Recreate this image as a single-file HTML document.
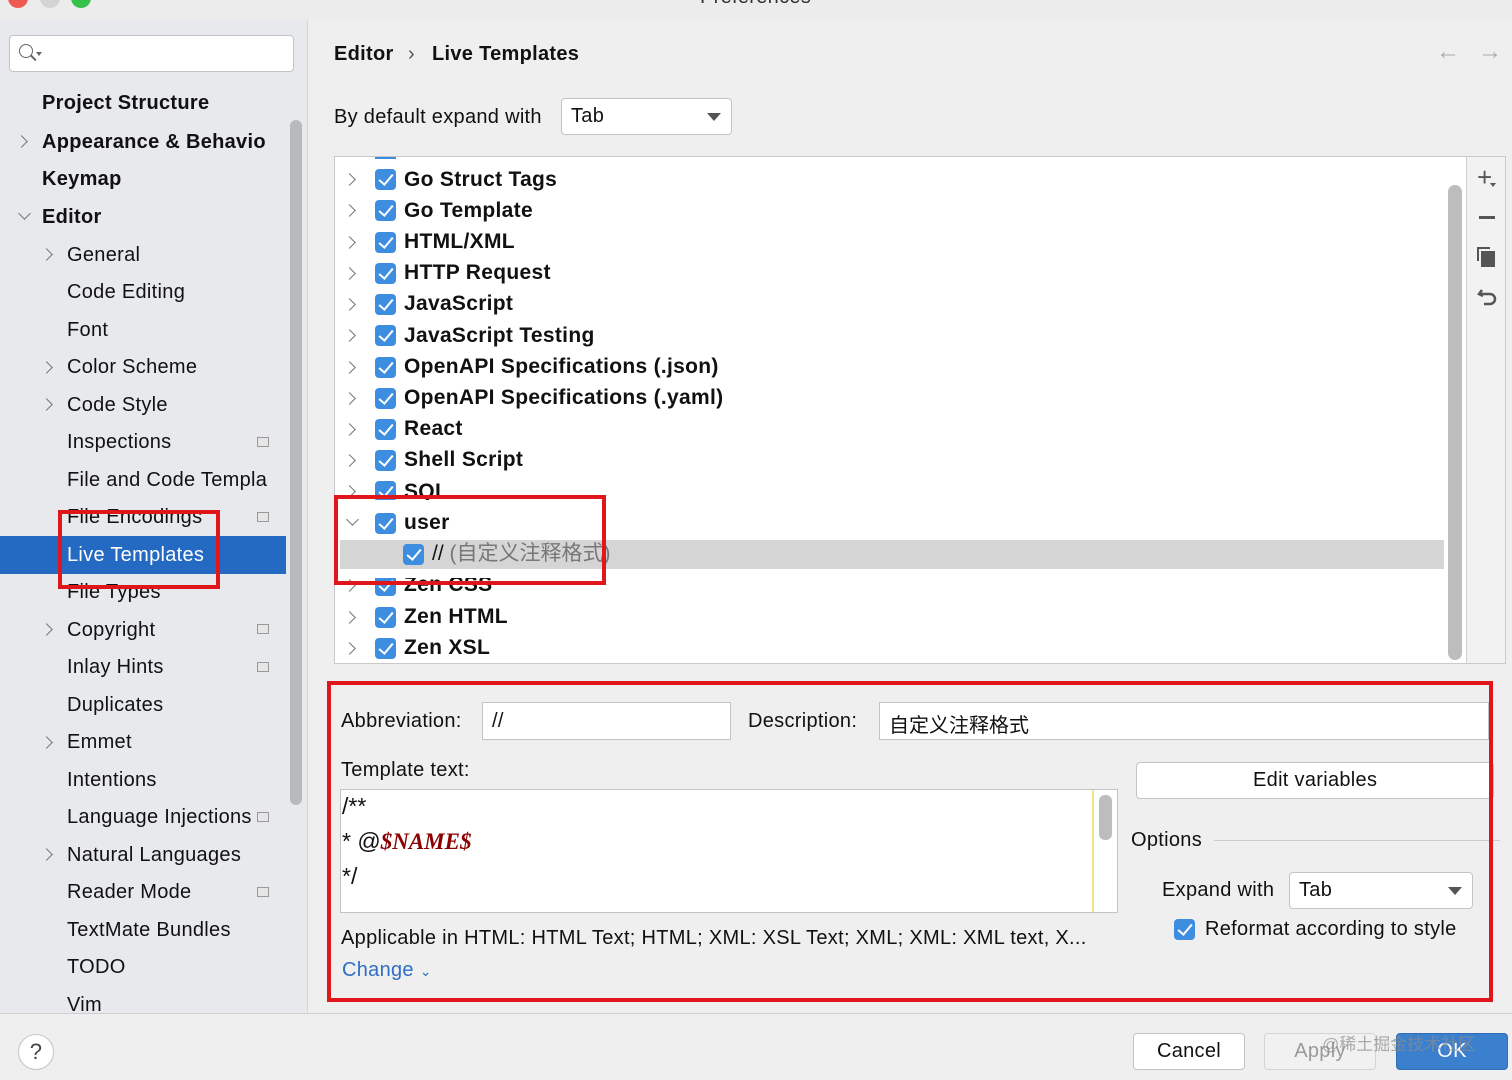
<!DOCTYPE html>
<html><head><meta charset="utf-8"><style>
*{box-sizing:border-box;margin:0;padding:0}
body{width:1512px;height:1080px;overflow:hidden;background:#efefef;font-family:"Liberation Sans","Noto Sans CJK SC",sans-serif;color:#111;position:relative;letter-spacing:0.3px}
.a{position:absolute;white-space:nowrap}
.sb{font-size:20px;line-height:24px}
.b{font-weight:bold}
.chev{position:absolute;width:9px;height:9px;border-right:1.6px solid #777;border-bottom:1.6px solid #777;transform:rotate(-45deg)}
.chevd{position:absolute;width:9px;height:9px;border-right:1.6px solid #777;border-bottom:1.6px solid #777;transform:rotate(45deg)}
.cb{position:absolute;width:21px;height:21px;background:#3d8ee0;border-radius:4px}
.cb:after{content:"";position:absolute;left:7px;top:2px;width:6px;height:12px;border-right:2.5px solid #fff;border-bottom:2.5px solid #fff;transform:rotate(40deg)}
.tr{font-size:21px;font-weight:bold;line-height:26px}
.mi{position:absolute;width:12px;height:10px;border:1.3px solid #999;background:#e6e6e6}
</style></head><body>
<div class="a" style="left:0;top:0;width:1512px;height:20px;background:#ececec"></div>
<div class="a" style="left:8px;top:-12px;width:20px;height:20px;border-radius:50%;background:#ee5a52"></div>
<div class="a" style="left:40px;top:-12px;width:20px;height:20px;border-radius:50%;background:#d4d4d4"></div>
<div class="a" style="left:71px;top:-12px;width:20px;height:20px;border-radius:50%;background:#36c24a"></div>
<div class="a" style="left:700px;top:-14px;font-size:20px;color:#333">Preferences</div>
<div class="a" style="left:0;top:20px;width:308px;height:994px;background:#e7e9ed;border-right:1px solid #d6d6d6"></div>
<div class="a" style="left:9px;top:35px;width:285px;height:37px;background:#fff;border:1.5px solid #c4c4c4;border-radius:4px"></div>
<div class="a" style="left:19px;top:44px;width:14px;height:14px;border:1.5px solid #666;border-radius:50%"></div>
<div class="a" style="left:30px;top:57px;width:7px;height:1.6px;background:#666;transform:rotate(45deg)"></div>
<div class="a" style="left:36px;top:52px;border-left:3px solid transparent;border-right:3px solid transparent;border-top:4px solid #666"></div>
<div class="a" style="left:290px;top:120px;width:12px;height:685px;background:#b8b9bb;border-radius:6px"></div>
<div class="a" style="left:0;top:536px;width:286px;height:38px;background:#2469c2"></div>

<div class="a sb b" style="left:42px;top:91px">Project Structure</div>
<div class="chev" style="left:17px;top:137px"></div>
<div class="a sb b" style="left:42px;top:130px">Appearance &amp; Behavio</div>
<div class="a sb b" style="left:42px;top:167px">Keymap</div>
<div class="chevd" style="left:20px;top:209px"></div>
<div class="a sb b" style="left:42px;top:205px">Editor</div>
<div class="chev" style="left:42px;top:250px"></div>
<div class="a sb" style="left:67px;top:243px">General</div>
<div class="a sb" style="left:67px;top:280px">Code Editing</div>
<div class="a sb" style="left:67px;top:318px">Font</div>
<div class="chev" style="left:42px;top:363px"></div>
<div class="a sb" style="left:67px;top:355px">Color Scheme</div>
<div class="chev" style="left:42px;top:400px"></div>
<div class="a sb" style="left:67px;top:393px">Code Style</div>
<div class="a sb" style="left:67px;top:430px">Inspections</div><div class="mi" style="left:257px;top:437px"></div>
<div class="a sb" style="left:67px;top:468px">File and Code Templa</div>
<div class="a sb" style="left:67px;top:505px">File Encodings</div><div class="mi" style="left:257px;top:512px"></div>
<div class="a sb" style="left:67px;top:543px;color:#fff">Live Templates</div>
<div class="a sb" style="left:67px;top:580px">File Types</div>
<div class="chev" style="left:42px;top:625px"></div>
<div class="a sb" style="left:67px;top:618px">Copyright</div><div class="mi" style="left:257px;top:624px"></div>
<div class="a sb" style="left:67px;top:655px">Inlay Hints</div><div class="mi" style="left:257px;top:662px"></div>
<div class="a sb" style="left:67px;top:693px">Duplicates</div>
<div class="chev" style="left:42px;top:738px"></div>
<div class="a sb" style="left:67px;top:730px">Emmet</div>
<div class="a sb" style="left:67px;top:768px">Intentions</div>
<div class="a sb" style="left:67px;top:805px;width:184px;overflow:hidden">Language Injections</div><div class="mi" style="left:257px;top:812px"></div>
<div class="chev" style="left:42px;top:850px"></div>
<div class="a sb" style="left:67px;top:843px">Natural Languages</div>
<div class="a sb" style="left:67px;top:880px">Reader Mode</div><div class="mi" style="left:257px;top:887px"></div>
<div class="a sb" style="left:67px;top:918px">TextMate Bundles</div>
<div class="a sb" style="left:67px;top:955px">TODO</div>
<div class="a sb" style="left:67px;top:993px">Vim</div>
<div class="a" style="left:58px;top:510px;width:162px;height:79px;border:4px solid #e0161b"></div>

<div class="a b" style="left:334px;top:43px;font-size:20px">Editor</div>
<div class="a" style="left:408px;top:43px;font-size:20px;color:#555">›</div>
<div class="a b" style="left:432px;top:43px;font-size:20px">Live Templates</div>
<div class="a" style="left:1436px;top:38px;font-size:24px;color:#aaa">←</div>
<div class="a" style="left:1478px;top:38px;font-size:24px;color:#aaa">→</div>
<div class="a" style="left:334px;top:106px;font-size:20px">By default expand with</div>
<div class="a" style="left:561px;top:98px;width:171px;height:37px;background:#fff;border:1.5px solid #c4c4c4;border-radius:4px"></div>
<div class="a" style="left:571px;top:105px;font-size:20px">Tab</div>
<div class="a" style="left:707px;top:113px;border-left:7px solid transparent;border-right:7px solid transparent;border-top:8px solid #555"></div>

<div class="a" style="left:334px;top:156px;width:1172px;height:508px;background:#fff;border:1px solid #c9c9c9"></div>
<div class="a" style="left:1466px;top:157px;width:39px;height:506px;background:#f2f2f2;border-left:1px solid #d0d0d0"></div>
<div class="a" style="left:1448px;top:185px;width:14px;height:475px;background:#bdbdbd;border-radius:7px"></div>
<div class="a" style="left:1477px;top:164px;font-size:26px;color:#555;line-height:26px">+</div>
<div class="a" style="left:1490px;top:183px;border-left:3px solid transparent;border-right:3px solid transparent;border-top:4px solid #555"></div>
<div class="a" style="left:1479px;top:216px;width:16px;height:2.5px;background:#555"></div>
<div class="a" style="left:1477px;top:247px;width:13px;height:14px;border-left:2.5px solid #555;border-top:2.5px solid #555"></div>
<div class="a" style="left:1481px;top:251px;width:14px;height:16px;background:#555"></div>
<svg class="a" style="left:1476px;top:287px" width="24" height="24" viewBox="0 0 24 24"><path d="M6 3 L3 7 L7 9 M3 7 H14 a5 5 0 0 1 0 10 H8" fill="none" stroke="#555" stroke-width="2.5"/></svg>

<div class="a" style="left:340px;top:540px;width:1104px;height:29px;background:#d5d5d5"></div>
<div class="a" style="left:375px;top:157px;width:21px;height:2px;background:#3d8ee0"></div>

<div class="chev" style="left:345px;top:175px"></div><div class="cb" style="left:375px;top:169px"></div><div class="a tr" style="left:404px;top:167px">Go Struct Tags</div>
<div class="chev" style="left:345px;top:206px"></div><div class="cb" style="left:375px;top:200px"></div><div class="a tr" style="left:404px;top:198px">Go Template</div>
<div class="chev" style="left:345px;top:238px"></div><div class="cb" style="left:375px;top:232px"></div><div class="a tr" style="left:404px;top:229px">HTML/XML</div>
<div class="chev" style="left:345px;top:269px"></div><div class="cb" style="left:375px;top:263px"></div><div class="a tr" style="left:404px;top:260px">HTTP Request</div>
<div class="chev" style="left:345px;top:300px"></div><div class="cb" style="left:375px;top:294px"></div><div class="a tr" style="left:404px;top:291px">JavaScript</div>
<div class="chev" style="left:345px;top:331px"></div><div class="cb" style="left:375px;top:325px"></div><div class="a tr" style="left:404px;top:323px">JavaScript Testing</div>
<div class="chev" style="left:345px;top:363px"></div><div class="cb" style="left:375px;top:357px"></div><div class="a tr" style="left:404px;top:354px">OpenAPI Specifications (.json)</div>
<div class="chev" style="left:345px;top:394px"></div><div class="cb" style="left:375px;top:388px"></div><div class="a tr" style="left:404px;top:385px">OpenAPI Specifications (.yaml)</div>
<div class="chev" style="left:345px;top:425px"></div><div class="cb" style="left:375px;top:419px"></div><div class="a tr" style="left:404px;top:416px">React</div>
<div class="chev" style="left:345px;top:456px"></div><div class="cb" style="left:375px;top:450px"></div><div class="a tr" style="left:404px;top:447px">Shell Script</div>
<div style="position:absolute;left:340px;top:476px;width:200px;height:24px;overflow:hidden">
<div class="chev" style="left:5px;top:11px"></div><div class="cb" style="left:35px;top:5px"></div><div class="a tr" style="left:64px;top:3px">SQL</div></div>
<div class="chevd" style="left:348px;top:515px"></div><div class="cb" style="left:375px;top:513px"></div><div class="a tr" style="left:404px;top:510px">user</div>
<div class="cb" style="left:403px;top:544px"></div><div class="a" style="left:432px;top:541px;font-size:21px;line-height:26px;color:#777;letter-spacing:0"><span style="color:#111">//</span> (自定义注释格式)</div>
<div style="position:absolute;left:340px;top:578px;width:200px;height:22px;overflow:hidden">
<div class="chev" style="left:5px;top:3px"></div><div class="cb" style="left:35px;top:-3px"></div><div class="a tr" style="left:64px;top:-6px">Zen CSS</div></div>
<div class="chev" style="left:345px;top:613px"></div><div class="cb" style="left:375px;top:607px"></div><div class="a tr" style="left:404px;top:604px">Zen HTML</div>
<div class="chev" style="left:345px;top:644px"></div><div class="cb" style="left:375px;top:638px"></div><div class="a tr" style="left:404px;top:635px">Zen XSL</div>
<div class="a" style="left:334px;top:495px;width:272px;height:90px;border:4px solid #e0161b"></div>

<div class="a" style="left:341px;top:710px;font-size:20px">Abbreviation:</div>
<div class="a" style="left:482px;top:702px;width:249px;height:38px;background:#fff;border:1.5px solid #c4c4c4"></div>
<div class="a" style="left:492px;top:710px;font-size:20px">//</div>
<div class="a" style="left:748px;top:710px;font-size:20px">Description:</div>
<div class="a" style="left:879px;top:702px;width:610px;height:38px;background:#fff;border:1.5px solid #c4c4c4"></div>
<div class="a" style="left:889px;top:709px;font-size:20px;letter-spacing:0">自定义注释格式</div>
<div class="a" style="left:341px;top:759px;font-size:20px">Template text:</div>
<div class="a" style="left:340px;top:789px;width:778px;height:124px;background:#fff;border:1.5px solid #c4c4c4"></div>
<div class="a" style="left:1092px;top:790px;width:1.5px;height:122px;background:#f0e58a"></div>
<div class="a" style="left:1099px;top:795px;width:13px;height:45px;background:#bdbdbd;border-radius:6px"></div>
<div class="a" style="left:342px;top:789px;font-size:23px;line-height:35px;letter-spacing:0">/**<br>* @<span style="color:#8b0000;font-style:italic;font-weight:bold;font-family:'Liberation Serif',serif">$NAME$</span><br>*/</div>
<div class="a" style="left:341px;top:927px;font-size:20px">Applicable in HTML: HTML Text; HTML; XML: XSL Text; XML; XML: XML text, X...</div>
<div class="a" style="left:342px;top:959px;font-size:20px;color:#2f6ec4">Change <span style="font-size:14px">⌄</span></div>
<div class="a" style="left:1136px;top:762px;width:358px;height:37px;background:#fff;border:1.5px solid #c4c4c4;border-radius:4px"></div>
<div class="a" style="left:1253px;top:769px;font-size:20px">Edit variables</div>
<div class="a" style="left:1131px;top:829px;font-size:20px">Options</div>
<div class="a" style="left:1214px;top:840px;width:286px;height:1px;background:#ccc"></div>
<div class="a" style="left:1162px;top:879px;font-size:20px">Expand with</div>
<div class="a" style="left:1289px;top:872px;width:184px;height:37px;background:#fff;border:1.5px solid #c4c4c4;border-radius:4px"></div>
<div class="a" style="left:1299px;top:879px;font-size:20px">Tab</div>
<div class="a" style="left:1448px;top:887px;border-left:7px solid transparent;border-right:7px solid transparent;border-top:8px solid #555"></div>
<div class="cb" style="left:1174px;top:919px"></div>
<div class="a" style="left:1205px;top:918px;font-size:20px">Reformat according to style</div>
<div class="a" style="left:327px;top:681px;width:1166px;height:321px;border:4px solid #e0161b"></div>

<div class="a" style="left:0;top:1013px;width:1512px;height:1px;background:#d0d0d0"></div>
<div class="a" style="left:18px;top:1034px;width:36px;height:36px;border-radius:50%;background:#fff;border:1.5px solid #c4c4c4;font-size:22px;text-align:center;line-height:33px;color:#444">?</div>
<div class="a" style="left:1133px;top:1033px;width:112px;height:37px;background:#fff;border:1.5px solid #c4c4c4;border-radius:4px;font-size:20px;text-align:center;line-height:34px">Cancel</div>
<div class="a" style="left:1264px;top:1033px;width:112px;height:37px;background:#f1f1f1;border:1.5px solid #d4d4d4;border-radius:4px;font-size:20px;text-align:center;line-height:34px;color:#999">Apply</div>
<div class="a" style="left:1396px;top:1033px;width:112px;height:37px;background:#3a80cf;border:1px solid #2f6db8;border-radius:4px;font-size:20px;text-align:center;line-height:35px;color:#fff">OK</div>
<div class="a" style="left:1322px;top:1030px;font-size:17px;color:rgba(140,140,140,0.7);letter-spacing:0">@稀土掘金技术社区</div>
</body></html>
